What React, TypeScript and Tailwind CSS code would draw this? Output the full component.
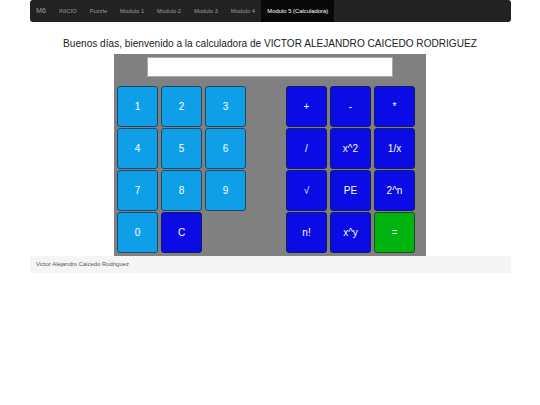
import React from "react";

const light = "bg-[#0e9fe8] border border-[#1b4a6a]";
const blue = "bg-[#0b0be6] border border-[#141a66]";
const green = "bg-[#00b30f] border border-[#16501c]";

function Btn({ label, cls }: { label?: string; cls?: string }) {
  if (!label) return <div className="w-[41px] h-[41px]" />;
  return (
    <div
      className={`w-[41px] h-[41px] rounded-[3px] flex items-center justify-center text-white text-[10px] ${cls}`}
    >
      {label}
    </div>
  );
}

const left: [string, string][][] = [
  [["1", light], ["2", light], ["3", light]],
  [["4", light], ["5", light], ["6", light]],
  [["7", light], ["8", light], ["9", light]],
  [["0", light], ["C", blue], ["", ""]],
];
const right: [string, string][][] = [
  [["+", blue], ["-", blue], ["*", blue]],
  [["/", blue], ["x^2", blue], ["1/x", blue]],
  [["√", blue], ["PE", blue], ["2^n", blue]],
  [["n!", blue], ["x^y", blue], ["=", green]],
];

export default function App() {
  const navItems = ["INICIO", "Puzzle", "Modulo 1", "Modulo 2", "Modulo 3", "Modulo 4"];
  return (
    <div className="w-[540px] min-h-[405px] bg-white" style={{ fontFamily: '"Liberation Sans", Arial, sans-serif' }}>
      <div className="w-[481px] mx-auto">
        <nav className="h-[22px] bg-[#222222] rounded-[3px] flex items-stretch">
          <div className="px-[6.5px] flex items-center text-[7.2px] text-[#9d9d9d]">M6</div>
          {navItems.map((n) => (
            <div key={n} className="px-[6.45px] flex items-center text-[5.85px] text-[#9d9d9d]">
              {n}
            </div>
          ))}
          <div className="px-[6px] flex items-center text-[5.85px] text-white bg-[#080808]">
            Modulo 5 (Calculadora)
          </div>
        </nav>
        <h1 className="mt-[14px] text-center text-[10.1px] leading-[16px] text-[#222]">
          Buenos días, bienvenido a la calculadora de VICTOR ALEJANDRO CAICEDO RODRIGUEZ
        </h1>
        <div className="mt-[2px] w-[312px] mx-auto bg-[#808080] pt-[3px] pb-[3px]">
          <div className="w-[246px] h-[20px] mx-auto bg-white border border-[#aaa]" />
          <div className="mt-[9px] flex pl-[3px]">
            <div className="flex flex-col gap-y-[1px]">
              {left.map((row, i) => (
                <div key={i} className="flex gap-x-[3px]">
                  {row.map(([l, c], j) => (
                    <Btn key={j} label={l} cls={c} />
                  ))}
                </div>
              ))}
            </div>
            <div className="ml-[40px] flex flex-col gap-y-[1px]">
              {right.map((row, i) => (
                <div key={i} className="flex gap-x-[3px]">
                  {row.map(([l, c], j) => (
                    <Btn key={j} label={l} cls={c} />
                  ))}
                </div>
              ))}
            </div>
          </div>
        </div>
        <footer className="h-[17px] bg-[#f5f5f5] px-[6.5px] flex items-center text-[5.9px] text-[#555]">
          Victor Alejandro Caicedo Rodriguez
        </footer>
      </div>
    </div>
  );
}
